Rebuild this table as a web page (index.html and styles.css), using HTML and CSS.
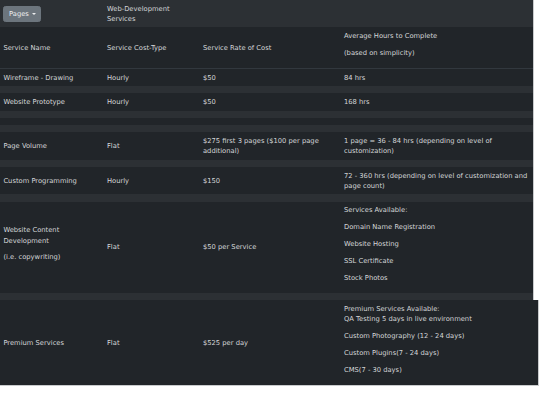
FILE: index.html
```html
<!DOCTYPE html>
<html lang="en">
<head>
    <meta charset="UTF-8">
    <meta name="viewport" content="width=device-width, initial-scale=1.0">
    <title>Web-Development Services</title>
    <link rel="stylesheet" href="styles.css">
</head>
<body>
    <div class="sheet">
        <table class="services">
            <colgroup>
                <col class="col-name">
                <col class="col-type">
                <col class="col-rate">
                <col>
            </colgroup>
            <thead>
                <tr class="band">
                    <td><button class="pages-btn">Pages<span class="caret"></span></button></td>
                    <td>Web-Development Services</td>
                    <td></td>
                    <td></td>
                </tr>
                <tr class="head">
                    <td>Service Name</td>
                    <td>Service Cost-Type</td>
                    <td>Service Rate of Cost</td>
                    <td><p>Average Hours to Complete</p><p>(based on simplicity)</p></td>
                </tr>
            </thead>
            <tbody>
                <tr>
                    <td>Wireframe - Drawing</td>
                    <td>Hourly</td>
                    <td>$50</td>
                    <td>84 hrs</td>
                </tr>
                <tr><td></td><td></td><td></td><td></td></tr>
                <tr>
                    <td>Website Prototype</td>
                    <td>Hourly</td>
                    <td>$50</td>
                    <td>168 hrs</td>
                </tr>
                <tr><td></td><td></td><td></td><td></td></tr>
                <tr><td></td><td></td><td></td><td></td></tr>
                <tr><td></td><td></td><td></td><td></td></tr>
                <tr>
                    <td>Page Volume</td>
                    <td>Flat</td>
                    <td>$275 first 3 pages ($100 per page additional)</td>
                    <td>1 page = 36 - 84 hrs (depending on level of customization)</td>
                </tr>
                <tr><td></td><td></td><td></td><td></td></tr>
                <tr>
                    <td>Custom Programming</td>
                    <td>Hourly</td>
                    <td>$150</td>
                    <td>72 - 360 hrs (depending on level of customization and page count)</td>
                </tr>
                <tr><td></td><td></td><td></td><td></td></tr>
                <tr>
                    <td><p>Website Content Development</p><p>(i.e. copywriting)</p></td>
                    <td>Flat</td>
                    <td>$50 per Service</td>
                    <td>
                        <p>Services Available:</p>
                        <p>Domain Name Registration</p>
                        <p>Website Hosting</p>
                        <p>SSL Certificate</p>
                        <p>Stock Photos</p>
                    </td>
                </tr>
                <tr><td></td><td></td><td></td><td></td></tr>
            </tbody>
        </table>
    </div>

    <table class="services wide">
        <colgroup>
            <col class="col-name">
            <col class="col-type">
            <col class="col-rate">
            <col>
        </colgroup>
        <tbody>
            <tr>
                <td>Premium Services</td>
                <td>Flat</td>
                <td>$525 per day</td>
                <td>
                    <p>Premium Services Available:<br>QA Testing 5 days in live environment</p>
                    <p>Custom Photography (12 - 24 days)</p>
                    <p>Custom Plugins(7 - 24 days)</p>
                    <p>CMS(7 - 30 days)</p>
                </td>
            </tr>
        </tbody>
    </table>
</body>
</html>
```

FILE: styles.css
```css
html { overflow: hidden; background: #fff; }
body { margin: 0; font-family: "DejaVu Sans", sans-serif; font-size: 6.75px; line-height: 1.5; color: #d4d6d8; }
p { margin: 0 0 6.75px; }

.sheet { width: 533px; border-right: 1px solid #c9cbcd; }
.services { width: 533px; border-collapse: collapse; table-layout: fixed; background: #212529; }
.services td { padding: 3.6px 3.4px; vertical-align: middle; text-align: left; }
.col-name { width: 103.6px; }
.col-type { width: 96px; }
.col-rate { width: 141px; }

.band { background: #2c3034; }
.head td { border-bottom: 1px solid #32383e; padding-bottom: 3.2px; }
tbody tr:nth-child(even) { background: #2c3034; }

.wide { width: 539px; border-right: 1px solid #c9cbcd; border-bottom: 1px solid #c9cbcd; }

.pages-btn { font: inherit; line-height: 10.125px; color: #eceeef; background: #6c757d; border: 1px solid #6c757d; border-radius: 2.5px; padding: 2.1px 4.6px; display: inline-flex; align-items: center; }
.caret { display: inline-block; margin-left: 3px; border-top: 2px solid #eceeef; border-left: 2px solid transparent; border-right: 2px solid transparent; }
```
